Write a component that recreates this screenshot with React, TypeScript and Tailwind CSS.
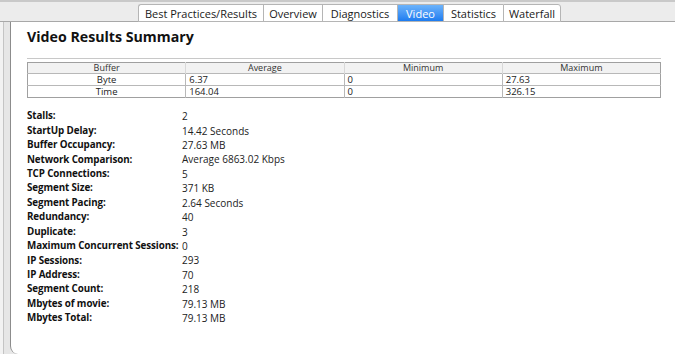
import React from "react";

const tabs = ["Best Practices/Results", "Overview", "Diagnostics", "Video", "Statistics", "Waterfall"];
const tabW = [125, 59, 75, 46, 60, 58];

const stats: [string, string][] = [
  ["Stalls:", "2"],
  ["StartUp Delay:", "14.42 Seconds"],
  ["Buffer Occupancy:", "27.63 MB"],
  ["Network Comparison:", "Average 6863.02 Kbps"],
  ["TCP Connections:", "5"],
  ["Segment Size:", "371 KB"],
  ["Segment Pacing:", "2.64 Seconds"],
  ["Redundancy:", "40"],
  ["Duplicate:", "3"],
  ["Maximum Concurrent Sessions:", "0"],
  ["IP Sessions:", "293"],
  ["IP Address:", "70"],
  ["Segment Count:", "218"],
  ["Mbytes of movie:", "79.13 MB"],
  ["Mbytes Total:", "79.13 MB"],
];

const rows = [
  ["Byte", "6.37", "0", "27.63"],
  ["Time", "164.04", "0", "326.15"],
];

export default function App() {
  const font = { fontFamily: '"Lucida Grande", "Open Sans", "DejaVu Sans", sans-serif' };
  return (
    <div className="w-[675px] h-[354px] bg-[#e8e8e8] overflow-hidden flex flex-col text-black" style={font}>
      {/* top tab bar */}
      <div className="h-[22px] relative border-t-[2px] border-[#c9c9c9] bg-[#ececec] border-b border-b-[#a8a8a8] flex">
        <div className="ml-[138px] mt-[2px] flex h-[18px]">
          {tabs.map((t, i) => (
            <div
              key={t}
              className={
                "flex items-center justify-center text-[11px] leading-none border-[#b5b5b5] border-t border-b " +
                (i === 0 ? "border-l rounded-tl-[3px] " : "border-l ") +
                (i === tabs.length - 1 ? "border-r rounded-tr-[3px] " : "") +
                (t === "Video"
                  ? "bg-gradient-to-b from-[#6cb3fa] to-[#1c7cf0] text-white border-[#3a86e0]"
                  : "bg-white text-[#1a1a1a]")
              }
              style={{ width: tabW[i] }}
            >
              {t}
            </div>
          ))}
        </div>
      </div>
      {/* body */}
      <div className="flex flex-1">
        <div className="w-[3px] bg-[#f2f2f2]" />
        <div className="w-[1px] bg-[#c4c4c4]" />
        <div className="w-[6px] bg-[#e6e6e6]" />
        <div className="flex-1 bg-white border-l border-[#8c8c8c] rounded-bl-[8px] pl-[16px] pr-[14px] pt-[5px]">
          <div className="text-[14.2px] font-bold leading-[20px] text-[#111]">Video Results Summary</div>
          <div className="mt-[11px] h-[1px] bg-[#c8c8c8] mr-0" />
          <table className="mt-[3px] w-[634px] border border-[#a0a0a0] border-collapse text-[9px] leading-none table-fixed">
            <thead>
              <tr className="bg-[#f2f2f2] h-[11px]">
                {["Buffer", "Average", "Minimum", "Maximum"].map((h, i) => (
                  <th key={h} className={"font-normal text-center text-[#333] leading-[10px] " + (i > 0 ? "border-l border-[#d8d8d8]" : "")}>
                    {h}
                  </th>
                ))}
              </tr>
            </thead>
            <tbody>
              {rows.map((r) => (
                <tr key={r[0]} className="h-[12px] border-t border-[#b8b8b8]">
                  {r.map((c, i) => (
                    <td
                      key={i}
                      className={
                        "text-[9.5px] leading-[11px] text-[#222] " +
                        (i === 0 ? "text-center" : "text-left pl-[3px] border-l border-[#b8b8b8]")
                      }
                    >
                      {c}
                    </td>
                  ))}
                </tr>
              ))}
            </tbody>
          </table>
          <div className="mt-[11px] flex flex-col">
            {stats.map(([k, v]) => (
              <div key={k} className="flex h-[14.43px] items-center text-[10px] leading-none">
                <div className="w-[155px] text-[9.8px] tracking-[-0.1px] font-bold text-[#111] whitespace-nowrap">{k}</div>
                <div className="text-[#222]">{v}</div>
              </div>
            ))}
          </div>
        </div>
      </div>
    </div>
  );
}
